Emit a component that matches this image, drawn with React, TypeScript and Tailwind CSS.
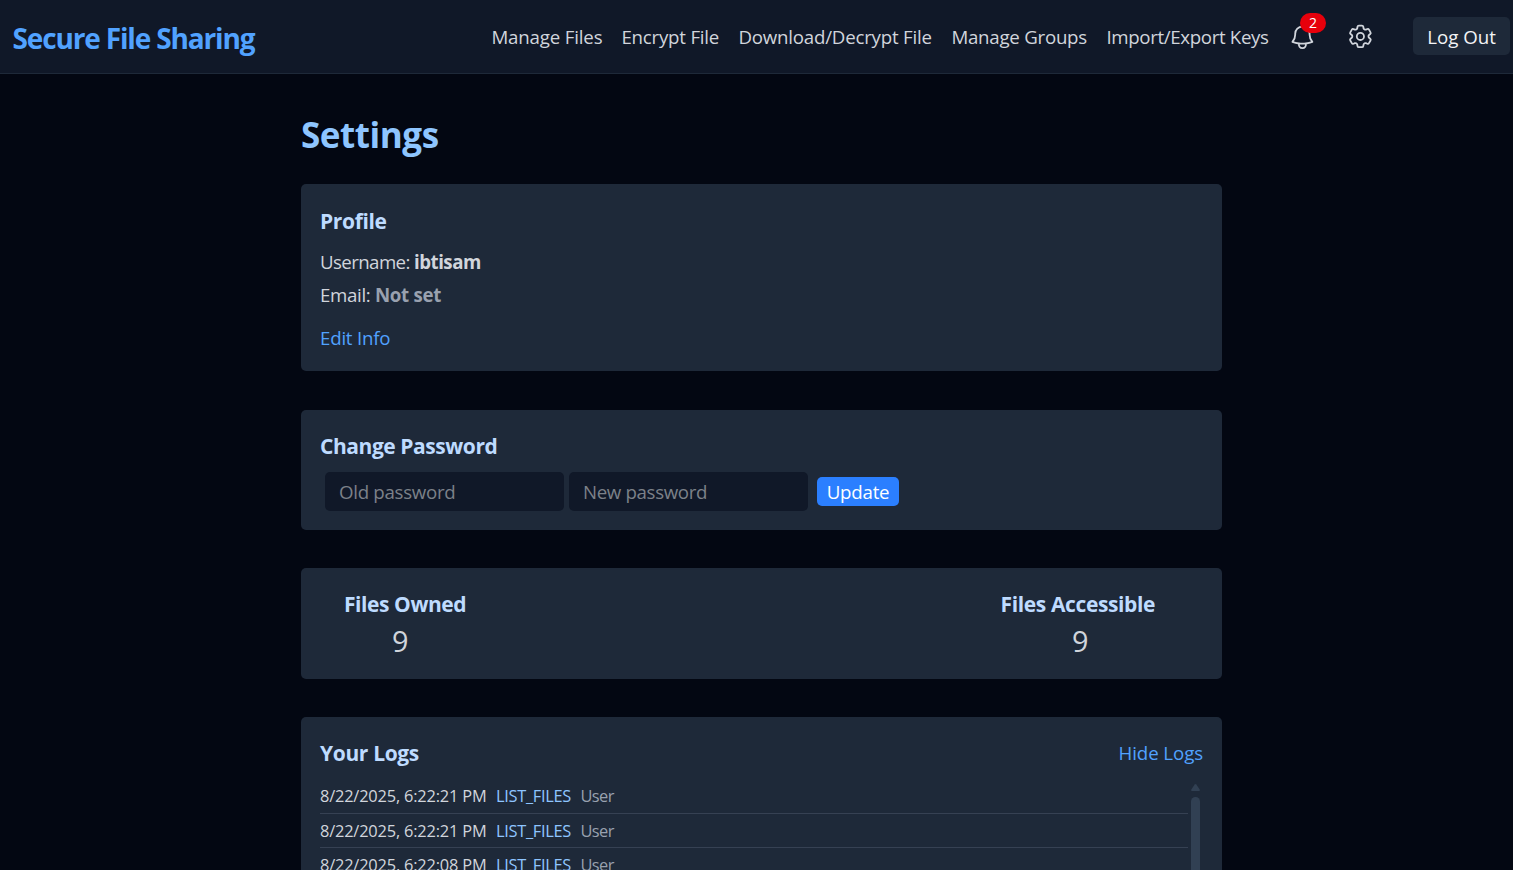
import React from 'react';
import { HiOutlineBell, HiOutlineCog6Tooth } from 'react-icons/hi2';

const navLinks = [
  { label: 'Manage Files', className: 'w-[130px] tracking-[-0.17px]' },
  { label: 'Encrypt File', className: 'w-[117px] tracking-[-0.22px]' },
  { label: 'Download/Decrypt File', className: 'w-[213px] tracking-[-0.22px]' },
  { label: 'Manage Groups', className: 'w-[155px] tracking-[-0.25px]' },
  { label: 'Import/Export Keys', className: 'w-[165px] tracking-[-0.35px]' },
];

const logs = [
  { time: '8/22/2025, 6:22:21 PM', action: 'LIST_FILES', actor: 'User' },
  { time: '8/22/2025, 6:22:21 PM', action: 'LIST_FILES', actor: 'User' },
  { time: '8/22/2025, 6:22:08 PM', action: 'LIST_FILES', actor: 'User' },
];

const heading = 'text-[21px] leading-[30px] font-bold text-[#bedbff] whitespace-nowrap';
const card = 'bg-[#1e2939] rounded-[5px] px-[19px]';

function Header() {
  return (
    <header className="flex h-[74px] items-center border-b border-[#1e2939] bg-[#101828] pl-[12.6px] pr-[3px] whitespace-nowrap">
      <div className="pt-[2px] text-[28px] font-bold leading-[40px] tracking-[-1.16px] text-[#51a2ff]">Secure File Sharing</div>
      <nav className="ml-auto flex items-center text-[18.7px] leading-[26px]">
        {navLinks.map((link) => (
          <a key={link.label} href="#" className={link.className}>{link.label}</a>
        ))}
        <button className="relative ml-[17px] pt-px text-[28.8px]">
          <HiOutlineBell />
          <span className="absolute -top-[9px] left-[12px] flex h-[20px] w-[26px] items-center justify-center rounded-full bg-[#e7000b] pr-px text-[14px] leading-[20px] text-white">2</span>
        </button>
        <button className="ml-[29px] text-[28.8px]">
          <HiOutlineCog6Tooth />
        </button>
        <button className="mb-[2px] ml-[38px] h-[38px] w-[97px] rounded-[5px] bg-[#1e2939] pt-[2px] text-[#f3f4f6]">Log Out</button>
      </nav>
    </header>
  );
}

function Profile() {
  return (
    <section className={`${card} h-[187px] pt-[22px]`}>
      <h2 className={`${heading} tracking-[-0.35px]`}>Profile</h2>
      <p className="mt-[13px] leading-[26px]">
        <span className="inline-block w-[94px] tracking-[-0.6px]">Username:</span>
        <strong className="tracking-[-0.5px]">ibtisam</strong>
      </p>
      <p className="mt-[7px] leading-[26px]">
        <span className="inline-block w-[55px] tracking-[-0.35px]">Email:</span>
        <strong className="tracking-[-0.32px] text-[#99a1af]">Not set</strong>
      </p>
      <button className="mt-[17px] block leading-[26px] tracking-[-0.22px] text-[#51a2ff]">Edit Info</button>
    </section>
  );
}

function ChangePassword() {
  const input =
    'h-[39px] w-[239px] rounded-[5px] bg-[#101828] px-[14px] outline-none placeholder:text-[#7c8189] placeholder:opacity-100';
  return (
    <section className={`${card} mt-[39px] h-[120px] pt-[21px]`}>
      <h2 className={`${heading} tracking-[-0.44px]`}>Change Password</h2>
      <form className="mt-[11px] flex items-center pl-[5px]">
        <input type="password" placeholder="Old password" className={`${input} tracking-[-0.3px]`} />
        <input type="password" placeholder="New password" className={`${input} ml-[5px] tracking-[-0.35px]`} />
        <button type="button" className="ml-[9px] h-[29px] w-[82px] rounded-[5px] bg-[#2b7fff] pb-px pt-px leading-[27px] tracking-[-0.22px] text-white">Update</button>
      </form>
    </section>
  );
}

function FileStats() {
  return (
    <section className={`${card} mt-[38px] flex h-[111px] justify-between pt-[21px]`}>
      <div className="pl-[24px]">
        <h2 className={`${heading} tracking-[-0.42px]`}>Files Owned</h2>
        <p className="mt-[2px] pl-[48px] text-[28.8px] leading-[40px]">9</p>
      </div>
      <div className="w-[203px]">
        <h2 className={`${heading} pl-[0.6px] tracking-[-0.38px]`}>Files Accessible</h2>
        <p className="mt-[2px] pl-[72px] text-[28.8px] leading-[40px]">9</p>
      </div>
    </section>
  );
}

function Logs() {
  return (
    <section className={`${card} mt-[38px] pt-[21px]`}>
      <div className="flex items-center justify-between">
        <h2 className={`${heading} tracking-[-0.35px]`}>Your Logs</h2>
        <button className="tracking-[-0.1px] text-[#51a2ff]">Hide Logs</button>
      </div>
      <div className="mt-[11px] flex h-[300px] gap-[3px] overflow-hidden">
        <ul className="w-[868px] text-[16.4px] leading-[24px]">
          {logs.map((log, i) => (
            <li key={i} className="flex h-[34px] items-center border-b border-[#364153] whitespace-nowrap first:h-[35px]">
              <span className="w-[176px] tracking-[-0.19px]">{log.time}</span>
              <span className="w-[84.5px] tracking-[-0.3px] text-[#8ec5ff]">{log.action}</span>
              <span className="tracking-[-0.6px] text-[#99a1af]">{log.actor}</span>
            </li>
          ))}
        </ul>
        <div className="flex w-[9px] flex-col pt-[5px]">
          <svg className="h-[7px] w-[9px] shrink-0" viewBox="0 0 9 7" fill="#314053">
            <path d="M3.7.6Q4.5-.4 5.3.6L8.7 5.4Q9.3 7 8 7H1Q-.3 7 .3 5.4Z" />
          </svg>
          <div className="mt-[6px] flex-1 rounded-t-full bg-[#314053]" />
        </div>
      </div>
    </section>
  );
}

export default function App() {
  return (
    <div className="h-[870px] overflow-hidden bg-[#030712] font-['Open_Sans','Noto_Sans',sans-serif] text-[18.7px] text-[#d1d5dc]">
      <Header />
      <main className="ml-[301px] w-[921px] pt-[39px]">
        <h1 className="mb-[27px] text-[35px] font-bold leading-[44px] tracking-[-0.45px] text-[#8ec5ff]">Settings</h1>
        <Profile />
        <ChangePassword />
        <FileStats />
        <Logs />
      </main>
    </div>
  );
}
